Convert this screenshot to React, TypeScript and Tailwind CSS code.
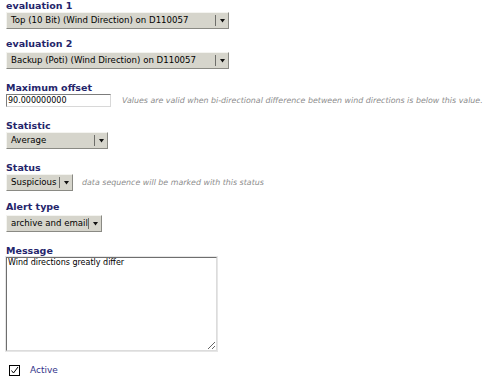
import React from "react";

const font = { fontFamily: '"DejaVu Sans", Verdana, sans-serif' };

function Label({ children, className = "" }: { children: React.ReactNode; className?: string }) {
  return (
    <div className={`font-bold text-[9.5px] leading-[11px] text-[#25256b] ${className}`}>
      {children}
    </div>
  );
}

function Select({
  value,
  width,
  className = "",
}: {
  value: string;
  width: string;
  className?: string;
}) {
  return (
    <div
      className={`flex shrink-0 items-center h-[17px] ${width} bg-[#d6d5cc] border border-t-[#f4f4f0] border-l-[#f4f4f0] border-b-[#8a8a84] border-r-[#8a8a84] ${className}`}
    >
      <span className="flex-1 min-w-0 overflow-hidden whitespace-nowrap pl-[4px] text-[8.6px] leading-[15px] text-black">
        {value}
      </span>
      <span className="w-px h-[11px] bg-[#6e6e6a]" />
      <span className="flex items-center justify-center w-[12px] h-full">
        <svg width="5" height="4" viewBox="0 0 5 4">
          <polygon points="0,0 5,0 2.5,3.5" fill="#111" />
        </svg>
      </span>
    </div>
  );
}

function Help({ children }: { children: React.ReactNode }) {
  return <span className="italic text-[7.9px] text-[#8c8c8c] whitespace-nowrap">{children}</span>;
}

export default function App() {
  return (
    <div className="w-[485px] h-[381px] bg-white overflow-hidden px-[6px]" style={font}>
      <Label>evaluation 1</Label>
      <Select value="Top (10 Bit) (Wind Direction) on D110057" width="w-[223px]" className="mt-[1px]" />

      <Label className="mt-[9px]">evaluation 2</Label>
      <Select value="Backup (Poti) (Wind Direction) on D110057" width="w-[223px]" className="mt-[3px]" />

      <Label className="mt-[13px]">Maximum offset</Label>
      <div className="flex items-center mt-[1px] gap-[11px]">
        <div className="shrink-0 w-[105px] h-[13px] bg-white border border-t-[#7c7c7c] border-l-[#7c7c7c] border-b-[#d8d8d8] border-r-[#d8d8d8] pl-[1px] text-[8px] leading-[11px] text-black">
          90.000000000
        </div>
        <Help>Values are valid when bi-directional difference between wind directions is below this value.</Help>
      </div>

      <Label className="mt-[13px]">Statistic</Label>
      <Select value="Average" width="w-[102px]" className="mt-[1px]" />

      <Label className="mt-[13px]">Status</Label>
      <div className="flex items-center mt-[1px] gap-[9px]">
        <Select value="Suspicious" width="w-[67px]" />
        <Help>data sequence will be marked with this status</Help>
      </div>

      <Label className="mt-[10px]">Alert type</Label>
      <Select value="archive and email" width="w-[96px]" className="mt-[3px]" />

      <Label className="mt-[13px]">Message</Label>
      <textarea
        readOnly
        defaultValue="Wind directions greatly differ"
        className="block mt-[1px] w-[211px] h-[94px] bg-white border border-t-[#6e6e6e] border-l-[#6e6e6e] border-b-[#dcdcdc] border-r-[#dcdcdc] outline outline-1 outline-[#e6e6e6] px-[1px] py-0 text-[8px] leading-[10px] text-black resize"
        style={font}
      />

      <div className="flex items-center mt-[14px] h-[11px]">
        <span className="ml-[3px] w-[11px] h-[11px] border border-black bg-white flex items-center justify-center">
          <svg width="9" height="9" viewBox="0 0 9 9">
            <path d="M1.5 4.5 L3.5 7 L8 1" stroke="#000" strokeWidth="1" fill="none" />
          </svg>
        </span>
        <span className="ml-[10px] text-[9px] leading-[11px] text-[#33338a]">Active</span>
      </div>
    </div>
  );
}
